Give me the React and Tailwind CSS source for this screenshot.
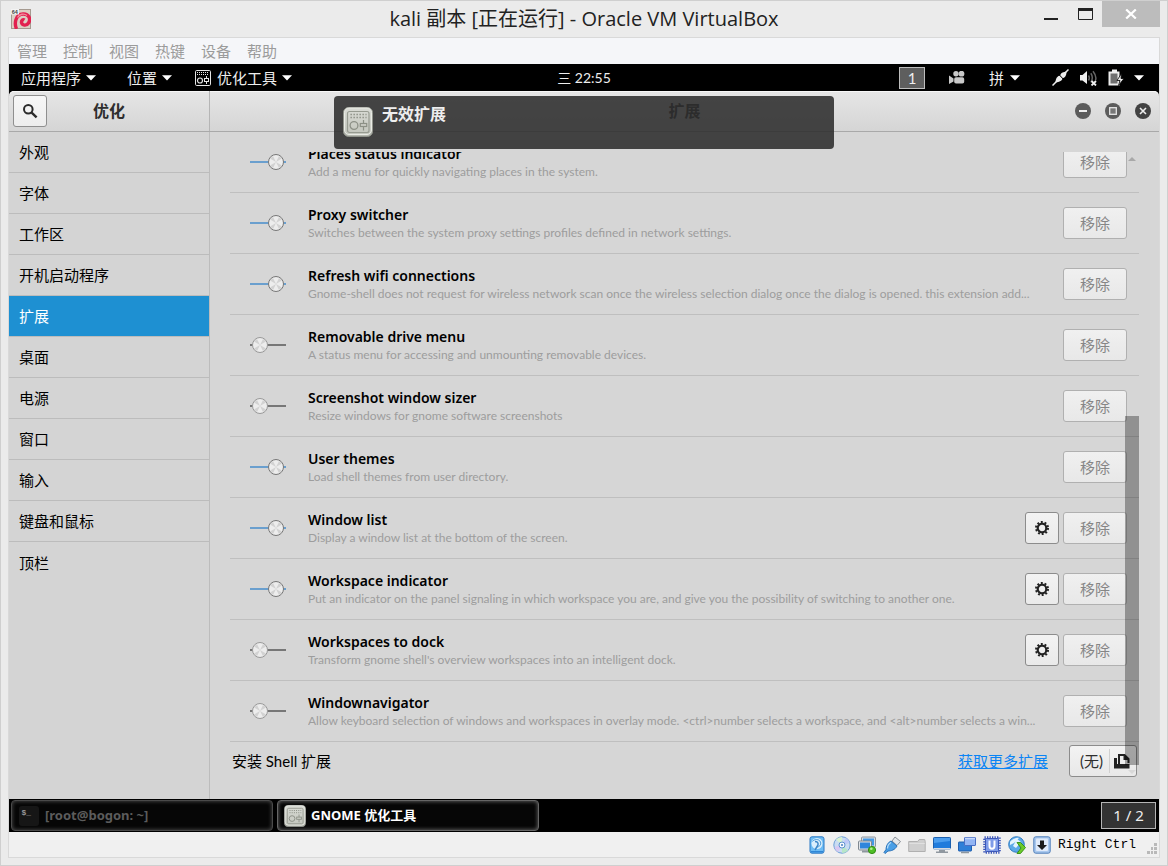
import React, { useState } from 'react';

const TWEAK_SECTIONS = ['外观', '字体', '工作区', '开机启动程序', '扩展', '桌面', '电源', '窗口', '输入', '键盘和鼠标', '顶栏'];

const EXTENSIONS = [
  { id: 'places', name: 'Places status indicator', text: 'Add a menu for quickly navigating places in the system.', on: true },
  { id: 'proxy', name: 'Proxy switcher', text: 'Switches between the system proxy settings profiles defined in network settings.', on: true },
  { id: 'wifi', name: 'Refresh wifi connections', text: 'Gnome-shell does not request for wireless network scan once the wireless selection dialog once the dialog is opened. this extension add...', on: true },
  { id: 'drive', name: 'Removable drive menu', text: 'A status menu for accessing and unmounting removable devices.', on: false },
  { id: 'sizer', name: 'Screenshot window sizer', text: 'Resize windows for gnome software screenshots', on: false },
  { id: 'themes', name: 'User themes', text: 'Load shell themes from user directory.', on: true },
  { id: 'list', name: 'Window list', text: 'Display a window list at the bottom of the screen.', on: true, settings: true },
  { id: 'indicator', name: 'Workspace indicator', text: 'Put an indicator on the panel signaling in which workspace you are, and give you the possibility of switching to another one.', on: true, settings: true },
  { id: 'dock', name: 'Workspaces to dock', text: "Transform gnome shell's overview workspaces into an intelligent dock.", on: false, settings: true },
  { id: 'navigator', name: 'Windownavigator', text: 'Allow keyboard selection of windows and workspaces in overlay mode. <ctrl>number selects a workspace, and <alt>number selects a win...', on: false },
];

function Caret() {
  return (
    <svg viewBox="0 0 10 6" className="h-[6px] w-[10px] shrink-0" fill="#fff" aria-hidden="true">
      <path d="M0 0.3h10L5 5.6z" />
    </svg>
  );
}

function TweakGlyph({ className, color }) {
  return (
    <svg viewBox="0 0 16 16" className={className} fill="none" stroke={color} aria-hidden="true">
      <rect x="0.5" y="0.5" width="15" height="15" rx="1.2" />
      <path d="M2 2.500h12M2 4.500h12" strokeDasharray="1 1" />
      <circle cx="5" cy="10.500" r="2.500" strokeWidth="1.200" />
      <path d="M11.500 6v3M11.500 11v3" />
      <rect x="9.500" y="8.500" width="4" height="3" />
    </svg>
  );
}

function TweakAppIcon({ className }) {
  return (
    <svg viewBox="0 0 30 30" className={className} fill="none" aria-hidden="true">
      <defs>
        <linearGradient id="tweak-face" x1="0" y1="0" x2="0" y2="1">
          <stop offset="0" stopColor="#d9dbd5" />
          <stop offset="1" stopColor="#c3c6bd" />
        </linearGradient>
      </defs>
      <rect x="0.5" y="0.5" width="29" height="29" rx="5" fill="#b3b6ad" stroke="#8f928a" />
      <rect x="1.5" y="1" width="27" height="26.5" rx="4.500" fill="url(#tweak-face)" stroke="#e9ebe5" />
      <rect x="4.500" y="4.500" width="21.500" height="21" rx="2" stroke="#979b91" strokeWidth="1.200" />
      <path d="M7.500 7.500h16M7.500 10.500h16" stroke="#85897f" strokeWidth="1.300" strokeDasharray="1.300 1.700" />
      <circle cx="11" cy="18.500" r="3.900" stroke="#8c9086" strokeWidth="1.300" />
      <path d="M20.500 13v3.500M20.500 19.500v4" stroke="#8c9086" strokeWidth="1.200" />
      <rect x="17.300" y="16.500" width="6.400" height="3" stroke="#8c9086" strokeWidth="1.200" />
    </svg>
  );
}

function DebianIcon() {
  return (
    <svg viewBox="0 0 20 20" className="h-5 w-5" fill="none" aria-hidden="true">
      <rect x="0.5" y="0.5" width="19" height="19" fill="#dccfc4" stroke="#a59a90" />
      <path d="M5.500 20C3 14 4.500 5.500 12 5c6-.3 8 5 5.500 9-2 3.200-6.500 2.500-7-.5-.3-2 1.500-3.500 3-2.500" stroke="#e2214f" strokeWidth="3.400" />
      <path d="M6.500 8.500C8.500 5 13 4 16 6.500" stroke="#f4899c" strokeWidth="1.400" />
      <rect x="0" y="0" width="8" height="5.500" fill="#f3f3f3" />
      <text x="0.8" y="4.800" fontSize="5.500" fontWeight="700" fill="#444" fontFamily="Liberation Sans, sans-serif">64</text>
    </svg>
  );
}

function TitleBar() {
  return (
    <header className="grid h-9 grid-cols-[1fr_auto_1fr]">
      <div className="pl-[3px] pt-2"><DebianIcon /></div>
      <h1 className="pt-1 font-['Open_Sans','Noto_Sans_CJK_SC',sans-serif] text-xl leading-7 text-[#222]">kali 副本 [正在运行] - Oracle VM VirtualBox</h1>
      <div className="flex items-start justify-end">
        <button type="button" aria-label="最小化" className="flex h-[26px] w-[34px] items-center justify-center">
          <svg viewBox="0 0 14 14" className="h-[14px] w-[14px]"><path d="M0 11h14v2H0z" fill="#222" /></svg>
        </button>
        <button type="button" aria-label="最大化" className="flex h-[26px] w-[34px] items-center justify-center">
          <svg viewBox="0 0 15 12" className="h-3 w-[15px]" fill="none"><path d="M0.500 0.500h14v11h-14z" stroke="#222" /><path d="M0 0h15v3H0z" fill="#222" /></svg>
        </button>
        <button type="button" aria-label="关闭" className="flex h-[26px] w-[58px] items-center justify-center bg-[#bcbcbc]">
          <svg viewBox="0 0 12 10" className="h-[10px] w-3"><path d="M1.200 0.500l9.600 9M10.800 0.500l-9.600 9" stroke="#fff" strokeWidth="2.200" /></svg>
        </button>
      </div>
    </header>
  );
}

function GnomePanel() {
  return (
    <div className="grid h-[27px] grid-cols-[1fr_auto_1fr] items-center bg-black text-[15px] leading-5 text-[#eee]">
      <nav className="flex items-center pl-3">
        <button type="button" className="mr-[31px] flex items-center gap-[5px]">应用程序<Caret /></button>
        <button type="button" className="mr-[23px] flex items-center gap-[5px]">位置<Caret /></button>
        <button type="button" className="flex items-center gap-[5px]">
          <TweakGlyph className="mr-px h-4 w-4" color="#e6e6e6" />优化工具<Caret />
        </button>
      </nav>
      <time className="text-sm">三 22:55</time>
      <div className="flex items-center justify-end pr-[15px]">
        <button type="button" className="mr-6 flex h-[22px] w-[26px] items-center justify-center border border-[#bdbdbd] bg-[#5e5e5e]">1</button>
        <svg viewBox="0 0 16 13" className="mr-6 h-[13px] w-4" fill="#c9c9c9" aria-hidden="true">
          <path d="M0 4.500l4.500 3v3L0 13z" />
          <circle cx="7" cy="2.800" r="2.700" />
          <circle cx="12.500" cy="2.700" r="2.900" />
          <rect x="5.200" y="6.200" width="10" height="6.300" rx="1.800" />
        </svg>
        <button type="button" className="mr-8 flex items-center gap-[6px]">拼<Caret /></button>
        <svg viewBox="0 0 17 17" className="mr-[11px] h-[17px] w-[17px]" aria-hidden="true">
          <path d="M0.500 16.500l6-6M16.500 0.500l-5 5" stroke="#eee" strokeWidth="1.500" />
          <path d="M3.500 13.500c0-4 2-7 5-7l2 2.500c0 2.500-3 4-7 4.500z" fill="#eee" />
          <path d="M14.500 2.500c0 4-1.500 6.500-4 6.500L8.300 6.300C9 3.500 11.500 3 14.500 2.500z" fill="#eee" />
          <path d="M7.200 6l4.200 4.200" stroke="#000" strokeWidth="0.900" />
        </svg>
        <svg viewBox="0 0 17 16" className="mr-[11px] h-4 w-[17px]" fill="none" aria-hidden="true">
          <path d="M0 5h2.500L7 1v13L2.500 10.500H0z" fill="#eee" />
          <path d="M8.500 5.500q1.500 2.500 0 5M10.800 3.300q3 4.200 0 9M13 1.200q4 5 2.500 9" stroke="#666" strokeWidth="1.500" />
          <path d="M11.500 11l4.500 4.500M16 11l-4.500 4.500" stroke="#eee" strokeWidth="1.800" />
        </svg>
        <svg viewBox="0 0 17 17" className="mr-[9px] h-[17px] w-[17px]" fill="none" aria-hidden="true">
          <path d="M4 0.500h5v2h2.500v14h-11v-14H4z" fill="#eee" />
          <rect x="2.500" y="4.500" width="7" height="10" fill="#707070" />
          <path d="M13.500 4.500L9 11.500h3l-1.500 5 5.500-7h-3z" fill="#eee" stroke="#000" strokeWidth="0.800" />
        </svg>
        <Caret />
      </div>
    </div>
  );
}

function WindowHeader({ title }) {
  return (
    <div className="bg-black">
      <header className="flex h-[41px] rounded-t-[5px] border-b border-b-[#a9a9a9] bg-linear-to-b from-[#e6e6e6] to-[#d5d5d5] font-bold shadow-[inset_0_1px_0_#f7f7f7] text-[#2e2e2e]">
        <div className="flex w-[201px] shrink-0 items-center border-r border-r-[#b5b5b5] px-1">
          <button type="button" aria-label="搜索" className="flex h-8 w-[34px] items-center justify-center rounded-[3px] border border-[#8f8f8f] bg-linear-to-b from-[#f7f7f7] to-[#ededed]">
            <svg viewBox="0 0 16 16" className="h-4 w-4" fill="none" stroke="#2b2b2b" aria-hidden="true">
              <circle cx="6.300" cy="6.300" r="4.300" strokeWidth="2" />
              <path d="M9.600 9.600l5 4.700" strokeWidth="2.400" />
            </svg>
          </button>
          <h2 className="flex-1 pr-[34px] text-center text-base leading-5">优化</h2>
        </div>
        <div className="grid flex-1 grid-cols-[1fr_auto_1fr] items-center">
          <h2 className="col-start-2 text-base leading-5">{title}</h2>
          <div className="flex justify-end gap-[14px] pr-2">
            <button type="button" aria-label="最小化窗口" className="h-4 w-4">
              <svg viewBox="0 0 16 16"><circle cx="8" cy="8" r="8" fill="#5c5c5c" /><path d="M4 7h8v2H4z" fill="#eee" /></svg>
            </button>
            <button type="button" aria-label="最大化窗口" className="h-4 w-4">
              <svg viewBox="0 0 16 16"><circle cx="8" cy="8" r="8" fill="#5c5c5c" /><rect x="4.700" y="4.700" width="6.600" height="6.600" fill="#777" stroke="#e6e6e6" strokeWidth="1.300" /></svg>
            </button>
            <button type="button" aria-label="关闭窗口" className="h-4 w-4">
              <svg viewBox="0 0 16 16"><circle cx="8" cy="8" r="8" fill="#424242" /><path d="M5 5l6 6M11 5l-6 6" stroke="#eee" strokeWidth="1.600" /></svg>
            </button>
          </div>
        </div>
      </header>
    </div>
  );
}

function Sidebar({ current, onPick }) {
  return (
    <nav className="w-[201px] shrink-0 border-r border-r-[#bcbcbc] bg-[#d4d4d4]">
      {TWEAK_SECTIONS.map((name, i) => (
        <button
          key={name}
          type="button"
          onClick={() => onPick(name)}
          className={`block h-[41px] w-full px-[10px] text-left text-[15px] leading-5 ${i < TWEAK_SECTIONS.length - 1 ? 'border-b border-b-[#bcbcbc]' : ''} ${name === current ? 'bg-[#1e90d2] text-white' : 'text-black'}`}
        >
          {name}
        </button>
      ))}
    </nav>
  );
}

function Toggle({ id, on, onChange }) {
  const x = on ? 26 : 10;
  return (
    <span className="relative mr-[22px] h-4 w-9 shrink-0">
      <input id={id} type="checkbox" checked={on} onChange={onChange} className="absolute inset-0 m-0 h-full w-full cursor-pointer appearance-none" />
      <svg viewBox="0 0 36 16" className="pointer-events-none h-4 w-9 overflow-visible" fill="none" aria-hidden="true">
        <path d="M0 8h36" stroke={on ? '#6a9fce' : '#777'} strokeWidth="2" />
        <circle cx={x} cy="8" r="7.500" fill="#ededed" stroke={on ? '#777' : '#999'} />
        <g transform={`translate(${x} 8)`} fill="#d2d2d2">
          <path d="M0 0L-3 -6L-6 -3.500zM0 0L3 -6L6 -3.500zM0 0L6 3.500L3 6zM0 0L-6 3.500L-3 6z" />
        </g>
      </svg>
    </span>
  );
}

function ExtensionRow({ item, on, onToggle }) {
  return (
    <li className="flex h-[61px] items-center border-b border-b-[#bfbfbf] pl-5 pr-3">
      <Toggle id={`ext-${item.id}`} on={on} onChange={onToggle} />
      <div className="min-w-0 flex-1">
        <label htmlFor={`ext-${item.id}`} className="block font-['Noto_Sans',sans-serif] text-sm font-semibold leading-5 text-black">{item.name}</label>
        <p className="truncate text-xs leading-4 text-[#9d9d9d]">{item.text}</p>
      </div>
      <div className="ml-[18px] flex gap-1">
        {item.settings && (
          <button type="button" aria-label={`${item.name} 设置`} className="flex h-8 w-[34px] items-center justify-center rounded-[3px] border border-[#8c8c8c] bg-linear-to-b from-[#f3f3f3] to-[#eaeaea]">
            <svg viewBox="0 0 16 16" className="h-4 w-4" fill="none" stroke="#222" aria-hidden="true">
              <circle cx="8" cy="8" r="4.300" strokeWidth="2.200" />
              <circle cx="8" cy="8" r="6" strokeWidth="2" strokeDasharray="1.900 1.870" />
            </svg>
          </button>
        )}
        <button type="button" className="h-8 w-16 rounded-[3px] border border-[#b0b0b0] bg-linear-to-b from-[#f0f0f0] to-[#e8e8e8] text-[15px] leading-5 text-[#868686]">移除</button>
      </div>
    </li>
  );
}

function ExtensionsPage() {
  const [enabled, setEnabled] = useState(() => Object.fromEntries(EXTENSIONS.map((e) => [e.id, e.on])));
  return (
    <main className="relative min-w-0 flex-1 bg-[#d6d6d6] px-5 pt-5">
      <div className="overflow-hidden">
        <ul className="-mt-5">
          {EXTENSIONS.map((item) => (
            <ExtensionRow
              key={item.id}
              item={item}
              on={enabled[item.id]}
              onToggle={() => setEnabled((s) => ({ ...s, [item.id]: !s[item.id] }))}
            />
          ))}
        </ul>
      </div>
      <div className="flex h-[57px] items-start pl-[2px] pr-[2px] pt-[3px] text-[15px]">
        <span className="flex-1 leading-8 text-black">安装 Shell 扩展</span>
        <a href="#more" className="mr-[21px] leading-8 text-[#0a84f5] underline">获取更多扩展</a>
        <button type="button" className="flex h-8 w-[68px] items-center rounded-[3px] border border-[#8c8c8c] bg-linear-to-b from-[#f3f3f3] to-[#e8e8e8] text-[#2e2e2e]">
          <span className="flex-1 pl-1 text-center leading-5">(无)</span>
          <span className="flex h-6 w-[27px] items-center border-l border-l-[#d0d0d0] pl-1">
            <svg viewBox="0 0 16 15" className="h-[15px] w-4" fill="none" aria-hidden="true">
              <path d="M5 10V1h5.500l4 4v4" stroke="#222" strokeWidth="2" />
              <path d="M9.500 0.500V6H15z" fill="#222" />
              <path d="M0 14.500V4h3v6h12.500v4.500z" fill="#222" />
            </svg>
          </span>
        </button>
      </div>
      <svg viewBox="0 0 8 4" className="absolute right-[23px] top-[25px] h-1 w-2" aria-hidden="true"><path d="M0 4l4-4 4 4z" fill="#a8a8a8" /></svg>
      <svg viewBox="0 0 8 4" className="absolute bottom-[25px] right-[23px] h-1 w-2" aria-hidden="true"><path d="M0 0l4 4 4-4z" fill="#d8d8d8" /></svg>
      <div className="absolute bottom-[34px] right-5 top-[284px] w-[14px] bg-black/32" />
    </main>
  );
}

function Notification() {
  return (
    <div className="pointer-events-none absolute inset-x-0 top-8 flex justify-center">
      <div role="status" className="flex h-[53px] w-[500px] gap-2 rounded-[4px] bg-[#2c2c2c]/87 pl-[9px]">
        <TweakAppIcon className="mt-[11px] h-[30px] w-[30px] shrink-0" />
        <p className="pl-px pt-2 text-base font-bold leading-5 text-[#eee]">无效扩展</p>
      </div>
    </div>
  );
}

function TaskBar() {
  return (
    <div className="flex h-[33px] items-center gap-1 bg-black px-[2px] font-['Noto_Sans','Noto_Sans_CJK_SC',sans-serif] text-[13px] font-bold">
      <button type="button" className="flex h-[31px] w-[262px] items-center gap-[6px] rounded-[4px] border border-[#4a4a4a] bg-[#060606] px-[7px] text-[#5c5c5c] shadow-[inset_0_0_4px_#555]">
        <svg viewBox="0 0 20 20" className="h-5 w-5" aria-hidden="true">
          <rect width="20" height="20" rx="3" fill="#161616" />
          <text x="2.500" y="8.500" fontSize="8" fontFamily="Liberation Mono, monospace" fill="#999">$_</text>
        </svg>
        [root@bogon: ~]
      </button>
      <button type="button" className="flex h-[31px] w-[262px] items-center gap-[5px] rounded-[4px] border border-[#666] bg-[#060606] px-[6px] text-white shadow-[inset_0_0_4px_#777]">
        <TweakAppIcon className="h-[22px] w-[22px]" />
        GNOME 优化工具
      </button>
      <button type="button" className="ml-auto mr-px h-[27px] w-[55px] border border-[#b5b5b5] bg-[#333] text-[15px] font-normal text-[#eee]">1 / 2</button>
    </div>
  );
}

function StatusIcon({ children }) {
  return <svg viewBox="0 0 18 18" className="h-[18px] w-[18px] shrink-0" fill="none" aria-hidden="true">{children}</svg>;
}

function StatusBar() {
  return (
    <footer className="flex h-[25px] items-center justify-end gap-[7px] bg-[#f0f0f0] pr-[2px]">
      <StatusIcon>
        <rect x="2" y="0.800" width="14" height="16.400" rx="2" fill="#6dbcf4" stroke="#2a78c4" />
        <path d="M3 15h12v1.500H3z" fill="#2f86d6" />
        <circle cx="9" cy="7.500" r="5.500" fill="#d9eefc" />
        <path d="M4.500 5.500C6 3 11 2.500 12.500 6c1 3-1.500 5-3.500 5" stroke="#4a9ad8" strokeWidth="1" />
        <path d="M7 5.500c2 0 3.500 1 3 3.500L7 14" stroke="#3b86c8" strokeWidth="1.500" />
      </StatusIcon>
      <StatusIcon>
        <circle cx="9" cy="9" r="8.200" fill="#c9dcf2" stroke="#6d9fd6" />
        <path d="M9 9L3 3.500A8 8 0 0 1 9 1z" fill="#d9f3d0" />
        <path d="M9 9l6 5.500A8 8 0 0 1 9 17z" fill="#b7e6c8" />
        <path d="M9 9L1.500 11A8 8 0 0 0 5 16z" fill="#d7c7f2" />
        <path d="M9 9l7.500-2A8 8 0 0 0 13 2z" fill="#bfc9f7" />
        <circle cx="9" cy="9" r="3" fill="#f5f9ff" stroke="#5e93cf" />
        <circle cx="9" cy="9" r="1" fill="#4a7fc0" />
      </StatusIcon>
      <StatusIcon>
        <rect x="3.500" y="1" width="14" height="10" rx="1" fill="#d7dce2" stroke="#8e979f" />
        <rect x="5" y="2.500" width="11" height="7" fill="#4499e6" />
        <rect x="0.500" y="5" width="13" height="9" rx="1" fill="#dfe3e8" stroke="#7f8890" />
        <rect x="2" y="6.500" width="10" height="6" fill="#2f86dc" />
        <path d="M4 14.500h7v2H4z" fill="#8e979f" />
        <circle cx="14" cy="14" r="3.600" fill="#4fbf26" stroke="#2f8c12" />
        <circle cx="13.300" cy="12.800" r="1.300" fill="#b5f08f" />
      </StatusIcon>
      <StatusIcon>
        <path d="M12 1l5.500 4.500-3.500 4-5-4.500z" fill="#e4e7ea" stroke="#888f96" />
        <path d="M8 5l6 5c-2 4-6 5-9 5l-3 2.500-1-1 2-3c0-3 1.500-7 5-8.500z" fill="#4a9fe6" stroke="#2a72b8" />
        <path d="M8 6.500c-2.500 1.500-3.500 4-3.500 6" stroke="#b4dcfa" strokeWidth="1.300" />
      </StatusIcon>
      <StatusIcon>
        <path d="M0.700 15.500V5.500h9l1.500-2h5.500l.5 2v10z" fill="#cfcfcf" stroke="#b0b0b0" />
        <path d="M1.300 7.500h15.500" stroke="#e0e0e0" strokeWidth="1" />
      </StatusIcon>
      <StatusIcon>
        <rect x="0.500" y="1.500" width="17" height="11.500" rx="0.800" fill="#1f7bdc" stroke="#1a5fae" />
        <path d="M1 2h16v3L1 7z" fill="#4a9dee" />
        <path d="M0.500 12h17v1.500H.5z" fill="#d5dae0" />
        <path d="M6 14h6v1.500h3V17H3v-1.500h3z" fill="#9098a0" />
      </StatusIcon>
      <StatusIcon>
        <rect x="0.500" y="6" width="13" height="9" rx="0.500" fill="#2f7fd8" stroke="#1f5fae" />
        <path d="M3 16.500h8" stroke="#8e979f" strokeWidth="1.500" />
        <rect x="6.500" y="1.500" width="11" height="8" rx="0.500" fill="#93b5f3" stroke="#4a6fc4" />
        <path d="M7 2.500h10" stroke="#c7d8fb" strokeWidth="1.500" />
      </StatusIcon>
      <StatusIcon>
        <rect x="1.500" y="1.500" width="15" height="15" stroke="#3c57b8" strokeWidth="2.600" strokeDasharray="1.300 1.200" />
        <rect x="2.500" y="2.500" width="13" height="13" rx="1" fill="#7f9ce8" stroke="#3c57b8" />
        <path d="M6.500 4.500v5.500c0 3.500 5 3.500 5 0V4.500" stroke="#fff" strokeWidth="2" />
      </StatusIcon>
      <StatusIcon>
        <circle cx="8.500" cy="8.500" r="7.800" fill="#5ba9e8" stroke="#2f7bc0" />
        <path d="M2 6c3-4 8-4.500 9-4l-5 5-4 2zM9 3l4 3-5 6-3-2z" fill="#e4f3fd" />
        <path d="M9 6.500h3.500l5 5-5 6H9l4-5.500z" fill="#6ccb2c" stroke="#2f8c12" strokeWidth="0.900" />
      </StatusIcon>
      <StatusIcon>
        <rect x="0.800" y="0.800" width="16.400" height="16.400" rx="2" fill="#a9c8ee" stroke="#4e7db8" />
        <rect x="3" y="2.500" width="12" height="12.500" rx="1" fill="#dfeafa" />
        <path d="M7 4.500h4V9h3l-5 5-5-5h3z" fill="#1a1a1a" />
      </StatusIcon>
      <span className="w-[82px] whitespace-nowrap font-['Liberation_Mono',monospace] text-[13px] leading-4 text-black">Right Ctrl</span>
      <svg viewBox="0 0 10 11" className="mt-2 h-[11px] w-[10px]" fill="#b9b9b9" aria-hidden="true">
        <path d="M7 0h3v3H7zM4 4h2v3H4zM7 4h3v3H7zM0 8h3v3H0zM4 8h2v3H4zM7 8h3v3H7z" />
      </svg>
    </footer>
  );
}

export default function App() {
  const [section, setSection] = useState('扩展');
  return (
    <div className="flex min-h-screen flex-col border border-[#cfcfcf] bg-[#ebebeb] pb-[7px] pl-[7px] pr-[7px] font-['Lato','Noto_Sans_CJK_SC',sans-serif]">
      <TitleBar />
      <div className="flex flex-1 flex-col border border-[#d9d9d9]">
        <nav className="flex h-[26px] items-center gap-4 bg-[#f5f6f9] px-2 pb-px text-[15px] leading-5 text-[#9b9b9b]">
          {['管理', '控制', '视图', '热键', '设备', '帮助'].map((name) => (
            <button key={name} type="button">{name}</button>
          ))}
        </nav>
        <div className="relative flex flex-1 flex-col">
          <GnomePanel />
          <WindowHeader title={section} />
          <div className="flex flex-1">
            <Sidebar current={section} onPick={setSection} />
            <ExtensionsPage />
          </div>
          <Notification />
          <TaskBar />
        </div>
        <StatusBar />
      </div>
    </div>
  );
}
